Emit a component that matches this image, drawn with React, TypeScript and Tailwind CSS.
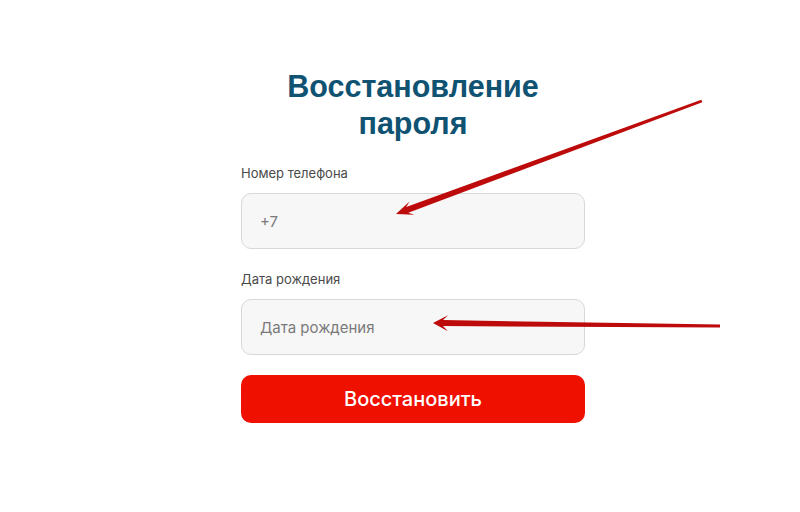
import React from "react";

function Arrow({ x, y, angle, length, head = 17, wing = 7 }: { x: number; y: number; angle: number; length: number; head?: number; wing?: number }) {
  const neck = head - 5;
  const points = `0,0 ${head},${-wing} ${neck},-3 ${length},-1.4 ${length},1.4 ${neck},3 ${head},${wing}`;
  return <polygon points={points} transform={`translate(${x} ${y}) rotate(${angle})`} fill="#bd0a0a" />;
}

export default function App() {
  return (
    <main className="relative min-h-[512px] w-full bg-white" style={{ fontFamily: "Inter, 'Noto Sans', sans-serif" }}>
      <div className="ml-[241px] flex w-[344px] flex-col pt-[68px]">
        <h1
          className="text-center text-[30.5px] font-bold leading-[37px] text-[#0f5272]"
          style={{ fontFamily: "'Liberation Sans', Arial, sans-serif" }}
        >
          Восстановление
          <br />
          пароля
        </h1>

        <label className="mt-[23px] text-[13px] leading-4 text-[#4a4a4a]">Номер телефона</label>
        <input
          type="text"
          placeholder="+7"
          className="mt-3 h-14 w-full rounded-[10px] border border-[#d8d8d8] bg-[#f7f7f7] px-[18px] text-[15px] text-[#333] outline-none placeholder:text-[#7a7a7a]"
        />

        <label className="mt-[22px] text-[13px] leading-4 text-[#4a4a4a]">Дата рождения</label>
        <input
          type="text"
          placeholder="Дата рождения"
          className="mt-3 h-14 w-full rounded-[10px] border border-[#d8d8d8] bg-[#f7f7f7] px-[18px] text-[15px] text-[#333] outline-none placeholder:text-[#7a7a7a]"
        />

        <button className="mt-5 h-12 w-full rounded-[10px] bg-[#ef1000] text-[20px] font-medium text-white">
          Восстановить
        </button>
      </div>

      {/* annotation arrows */}
      <svg className="pointer-events-none absolute inset-0" width="800" height="512" viewBox="0 0 800 512">
        <Arrow x={396} y={214} angle={-20.27} length={326} />
        <Arrow x={433} y={323} angle={0.6} length={287} head={15} wing={8} />
      </svg>
    </main>
  );
}
